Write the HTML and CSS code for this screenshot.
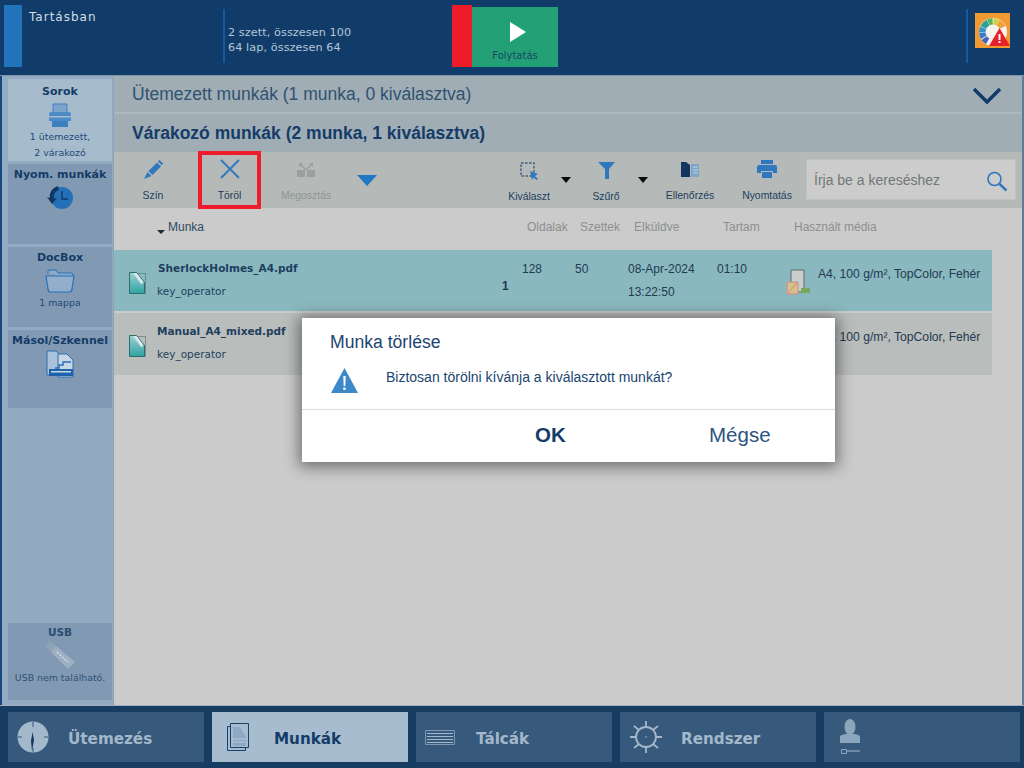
FILE: index.html
```html
<!DOCTYPE html>
<html lang="hu">
<head>
<meta charset="utf-8">
<title>Munkák</title>
<link rel="stylesheet" href="styles.css">
</head>
<body>
<div class="page">
  <header class="topbar">
    <div class="state-block"></div>
    <div class="state-text">Tartásban</div>
    <div class="counts"><div>2 szett, összesen 100</div><div>64 lap, összesen 64</div></div>
    <div class="red-block"></div>
    <div class="resume">
      <svg width="16" height="20" viewBox="0 0 16 20"><path d="M0 0 16 10 0 20Z" fill="#fff"/></svg>
      <span>Folytatás</span>
    </div>
    <div class="top-spacer"></div>
    <div class="top-divider"></div>
    <div class="status-icon">
      <svg width="35" height="35" viewBox="0 0 35 35">
        <rect width="35" height="35" fill="#f29a32"/>
        <circle cx="18" cy="19" r="14" fill="#f6f3ee"/>
        <path d="M18 19 12 6.400A14 14 0 0 1 17.500 5Z" fill="#5cb05e"/>
        <path d="M18 19 18.500 5A14 14 0 0 1 24 6.400Z" fill="#cdd23f"/>
        <path d="M18 19 24.500 6.700A14 14 0 0 1 30.500 13Z" fill="#eda13c"/>
        <path d="M18 19 11.500 6.700A14 14 0 0 0 5.500 13Z" fill="#2f9f96"/>
        <path d="M18 19 5.200 13.500A14 14 0 0 0 4 19.500Z" fill="#3a8fc8"/>
        <path d="M18 19 4 20A14 14 0 0 0 6 26Z" fill="#3d7cc4"/>
        <path d="M18 19 6.500 27A14 14 0 0 0 11 31Z" fill="#4a62b8"/>
        <circle cx="18" cy="19" r="7.500" fill="#f6f3ee"/>
        <path d="M24.500 15 35 33H14Z" fill="#e8212b"/>
        <rect x="23.500" y="21" width="2" height="6" fill="#fff"/>
        <rect x="23.500" y="28" width="2" height="2" fill="#fff"/>
      </svg>
    </div>
  </header>

  <div class="middle">
    <nav class="sidebar">
      <div class="tile tile-active">
        <div class="tile-title">Sorok</div>
        <svg class="tile-icon" width="24" height="25" viewBox="0 0 24 25">
          <path d="M5 1h14v9H5Z" fill="#7da4cb" stroke="#3d80c2"/>
          <path d="M3 9h18a2 2 0 0 1 2 2v7H1v-7a2 2 0 0 1 2-2Z" fill="#4c8bc8"/>
          <rect x="1" y="13" width="22" height="1.500" fill="#a6bccd"/>
          <path d="M4 18h16v6H4Z" fill="#3d80c2"/>
        </svg>
        <div class="tile-sub">1 ütemezett,<br>2 várakozó</div>
      </div>
      <div class="tile tile-jobs">
        <div class="tile-title">Nyom. munkák</div>
        <svg class="tile-icon" width="26" height="24" viewBox="0 0 26 24">
          <circle cx="15" cy="13" r="11" fill="#2470b8"/>
          <path d="M11 1C5 3 2 8 3 13l-3-1 5 7 5-6-3 .5C6 10 8 6 12 5Z" fill="#12365f"/>
          <path d="M15 6v8h6" fill="none" stroke="#12365f" stroke-width="1.300"/>
        </svg>
      </div>
      <div class="tile tile-docbox">
        <div class="tile-title">DocBox</div>
        <svg class="tile-icon" width="30" height="24" viewBox="0 0 30 24">
          <path d="M3 5V2q0-1 1-1h7l2 3h13q2 0 2 2v2" fill="#8ea9c6" stroke="#2672bd"/>
          <path d="M1 7h28l-2 13q0 3-3 3H6q-3 0-3-3Z" fill="#92aecb" stroke="#2672bd" stroke-width="1.200"/>
        </svg>
        <div class="tile-sub">1 mappa</div>
      </div>
      <div class="tile tile-copy">
        <div class="tile-title">Másol/Szkennel</div>
        <svg class="tile-icon" width="28" height="28" viewBox="0 0 28 28">
          <path d="M1 1h9l4 4v20H1Z" fill="#a9c1d9" stroke="#2a70b5"/>
          <path d="M12 4h9l6 6v17H12Z" fill="#c8d7e5" stroke="#2a70b5"/>
          <path d="M9 18h4v-3h4v-3h8" fill="none" stroke="#2a70b5" stroke-width="1.500"/>
          <rect x="3" y="19" width="24" height="7" fill="#1c63ab"/>
          <rect x="5" y="21" width="20" height="1.500" fill="#c8d7e5"/>
        </svg>
      </div>
      <div class="side-spacer"></div>
      <div class="tile tile-usb">
        <div class="tile-title tile-title-small">USB</div>
        <svg class="usb-icon" width="32" height="30" viewBox="0 0 32 30">
          <path d="M1 6 6 1l6 5-5 6Z" fill="#8fa3b6"/>
          <path d="M7 12 12 6 31 22 24 29Z" fill="#9eb0c1"/>
          <path d="M13 12 24 22" stroke="#d3dce3" stroke-width="1.500" stroke-dasharray="2 1.500"/>
        </svg>
        <div class="tile-sub usb-sub">USB nem található.</div>
      </div>
    </nav>

    <main class="content">
      <div class="queue-row queue-sched">
        <span>Ütemezett munkák (1 munka, 0 kiválasztva)</span>
        <svg class="chevron" width="30" height="17" viewBox="0 0 30 17"><path d="M2 2 15 15 28 2" fill="none" stroke="#113c6a" stroke-width="3.500"/></svg>
      </div>
      <div class="queue-row queue-wait">Várakozó munkák (2 munka, 1 kiválasztva)</div>

      <div class="toolbar">
        <div class="tool tool-szin">
          <svg width="20" height="20" viewBox="0 0 20 20"><path d="M5.500 11 14 2.500 18 6.500 9.500 15Z" fill="#2f78bd"/><path d="M15 1.500 16.500 0 20 3.500 18.800 5.200Z" fill="#2f78bd"/><path d="M1 19 4.500 12 8.500 16Z" fill="#2f78bd"/></svg>
          <span>Szín</span>
        </div>
        <div class="tool tool-del">
          <svg width="22" height="22" viewBox="0 0 22 22"><path d="M2 2 20 20M20 2 2 20" stroke="#2f78bd" stroke-width="1.800" fill="none"/></svg>
          <span>Töröl</span>
        </div>
        <div class="tool tool-share">
          <svg width="20" height="15" viewBox="0 0 20 15"><path d="M1 7h8v7H1ZM11 7h8v7h-8Z" fill="#9a9f9f"/><path d="M10 7 5 2M10 7l5-5" stroke="#9a9f9f" stroke-width="1.500" fill="none"/><path d="M3 0h4L3 4ZM17 0h-4l4 4Z" fill="#9a9f9f"/></svg>
          <span>Megosztás</span>
        </div>
        <div class="more-arrow"></div>
        <div class="tool-spacer"></div>
        <div class="tool tool-select">
          <svg width="18" height="18" viewBox="0 0 18 18"><path d="M1 1h13v13H1Z" fill="none" stroke="#3f5f7e" stroke-width="1.400" stroke-dasharray="2.500 1.500"/><path d="M10 9 18 12 15 14 18 17 16.500 18 13.500 15.500 12 18Z" fill="#2f78bd"/></svg>
          <span>Kiválaszt</span>
        </div>
        <div class="drop-arrow drop-a"></div>
        <div class="tool tool-filter">
          <svg width="17" height="17" viewBox="0 0 17 17"><path d="M0 0h17l-6 7v10H7V7Z" fill="#2f78bd"/></svg>
          <span>Szűrő</span>
        </div>
        <div class="drop-arrow drop-b"></div>
        <div class="tool tool-check">
          <svg width="18" height="15" viewBox="0 0 18 15"><path d="M0 0h5l4 3v12H0Z" fill="#12365f"/><path d="M10 2h8v13h-8Z" fill="#7ea6c9"/><path d="M12 5h5M12 8h5M12 11h5" stroke="#bfd2e2"/></svg>
          <span>Ellenőrzés</span>
        </div>
        <div class="tool tool-print">
          <svg width="20" height="18" viewBox="0 0 20 18"><path d="M4 0h12v4H4Z" fill="#2f78bd"/><path d="M2 5h16a2 2 0 0 1 2 2v6h-4v-2H4v2H0V7a2 2 0 0 1 2-2Z" fill="#2f78bd"/><path d="M5 12h10v6H5Z" fill="#2f78bd"/></svg>
          <span>Nyomtatás</span>
        </div>
        <div class="search">
          <span>Írja be a kereséshez</span>
          <svg width="22" height="21" viewBox="0 0 22 21"><circle cx="8.500" cy="8" r="6.500" fill="none" stroke="#2f78bd" stroke-width="1.600"/><path d="M13.500 13 20.500 19.500" stroke="#2f78bd" stroke-width="2.400"/></svg>
        </div>
      </div>

      <div class="table-head">
        <div class="col-job"><span class="sort-arrow"></span>Munka</div>
        <div class="th">Oldalak</div>
        <div class="th">Szettek</div>
        <div class="th">Elküldve</div>
        <div class="th">Tartam</div>
        <div class="th">Használt média</div>
      </div>

      <div class="job job-selected">
        <svg class="doc-icon" width="17" height="22" viewBox="0 0 17 22"><defs><linearGradient id="doc1" x1="0" y1="0" x2="0" y2="1"><stop offset="0" stop-color="#9fd0d2"/><stop offset="1" stop-color="#2fa3a3"/></linearGradient></defs><path d="M1.500 1.500h15v20" fill="none" stroke="#3c5f68" stroke-dasharray="1 1"/><path d="M.5.500h7l8 10v11H.5Z" fill="url(#doc1)" stroke="#2d6e6c"/><path d="M4 1h3.500l7 9-2 2.500Z" fill="#d9e8ea"/></svg>
        <div class="job-name"><b>SherlockHolmes_A4.pdf</b><span>key_operator</span></div>
        <div class="job-one">1</div>
        <div class="cell c-pages">128</div>
        <div class="cell c-sets">50</div>
        <div class="cell c-date">08-Apr-2024<br>13:22:50</div>
        <div class="cell c-time">01:10</div>
        <svg class="media-icon" width="26" height="26" viewBox="0 0 26 26"><path d="M5 1h13v22H5Z" fill="#c9cdcc" stroke="#5c6a6c"/><path d="M1 13h11v12H1Z" fill="#d7c08b" stroke="#c98b88"/><path d="M2 24 11 14" stroke="#c98b88"/><rect x="15" y="19" width="9" height="5" fill="#77a95a"/></svg>
        <div class="cell c-media">A4, 100 g/m², TopColor, Fehér</div>
      </div>
      <div class="job job-normal">
        <svg class="doc-icon" width="17" height="22" viewBox="0 0 17 22"><defs><linearGradient id="doc2" x1="0" y1="0" x2="0" y2="1"><stop offset="0" stop-color="#9fd0d2"/><stop offset="1" stop-color="#2fa3a3"/></linearGradient></defs><path d="M1.500 1.500h15v20" fill="none" stroke="#3c5f68" stroke-dasharray="1 1"/><path d="M.5.500h7l8 10v11H.5Z" fill="url(#doc2)" stroke="#2d6e6c"/><path d="M4 1h3.500l7 9-2 2.500Z" fill="#d9e8ea"/></svg>
        <div class="job-name"><b>Manual_A4_mixed.pdf</b><span>key_operator</span></div>
        <div class="job-one"></div>
        <div class="cell c-pages"></div>
        <div class="cell c-sets"></div>
        <div class="cell c-date"></div>
        <div class="cell c-time"></div>
        <div class="media-gap"></div>
        <div class="cell c-media">A4, 100 g/m², TopColor, Fehér</div>
      </div>
    </main>
  </div>

  <footer class="tabs">
    <div class="tab">
      <svg width="32" height="32" viewBox="0 0 32 32"><circle cx="16" cy="16" r="15.500" fill="#a3b8ca"/><path d="M16 1v5M16 27v4M1 16h4M27 16h4" stroke="#375a7c"/><path d="M15.500 11 17 19 15 30 14 20Z" fill="#12365f"/></svg>
      <span class="tab-label tab-label-1">Ütemezés</span>
    </div>
    <div class="tab tab-active">
      <svg width="22" height="28" viewBox="0 0 22 28"><path d="M.5 3.500h18v24H.5Z" fill="none" stroke="#1a4168"/><path d="M3.500.500h18v24H3.500Z" fill="#a7bccf" stroke="#1a4168"/><path d="M6 4h7l6 10v9H6Z" fill="#8da9c4"/><path d="M6 16h13M6 19h13" stroke="#b8c9d8"/></svg>
      <span class="tab-label tab-label-2">Munkák</span>
    </div>
    <div class="tab">
      <svg width="30" height="15" viewBox="0 0 30 15"><path d="M.5.500h29v14H.5Z" fill="none" stroke="#7f98b0"/><path d="M2 3.500h26M2 6.500h26M2 9.500h26M2 12.500h26" stroke="#a3b8ca"/></svg>
      <span class="tab-label tab-label-3">Tálcák</span>
    </div>
    <div class="tab">
      <svg width="34" height="34" viewBox="0 0 34 34"><circle cx="17" cy="17" r="10" fill="none" stroke="#a3b8ca" stroke-width="1.800"/><path d="M17 1v6M17 27v6M1 17h6M27 17h6M5 6l5 4M29 6l-5 4M5 28l5-4M29 28l-5-4" stroke="#a3b8ca" stroke-width="1.800"/><circle cx="17" cy="17" r=".8" fill="#a3b8ca"/></svg>
      <span class="tab-label tab-label-4">Rendszer</span>
    </div>
    <div class="tab">
      <svg class="user-icon" width="22" height="36" viewBox="0 0 22 36"><ellipse cx="11" cy="8" rx="5.500" ry="8" fill="#8ba5bd"/><path d="M1 17q3-2 6-2h8q3 0 6 2v7H1Z" fill="#8ba5bd"/><path d="M2.500 30.500h5v4h-5Z" fill="none" stroke="#8ba5bd"/><path d="M7 32h14" stroke="#8ba5bd" stroke-width="1.300"/></svg>
    </div>
  </footer>

  <div class="modal">
    <div class="modal-body">
      <div class="modal-title">Munka törlése</div>
      <div class="modal-msg">
        <svg width="27" height="25" viewBox="0 0 27 25"><path d="M13.500 0 27 25H0Z" fill="#3d88c9"/><path d="M12.300 8h2.400l-.4 10h-1.600Z" fill="#fff"/><rect x="12.300" y="19.500" width="2.400" height="2.400" fill="#fff"/></svg>
        <span>Biztosan törölni kívánja a kiválasztott munkát?</span>
      </div>
    </div>
    <div class="modal-actions">
      <span class="btn-ok">OK</span>
      <span class="btn-cancel">Mégse</span>
    </div>
  </div>
</div>
</body>
</html>
```
FILE: styles.css
```css
* { box-sizing: border-box; }
html, body { margin: 0; padding: 0; }
body { font-family: "Liberation Sans", Arial, sans-serif; background: #113c6a; }
svg { display: block; flex: none; }
.page { position: relative; width: 1024px; height: 768px; overflow: hidden; display: flex; flex-direction: column; background: #113c6a; }

.topbar { height: 76px; flex: none; display: flex; align-items: flex-start; color: #c4d2df; font-family: "DejaVu Sans", sans-serif; border-bottom: 1px solid #7c93a8; }
.state-block { width: 18px; height: 62px; margin: 5px 0 0 4px; background: #2272bc; flex: none; }
.state-text { width: 194px; margin: 10px 0 0 7px; font-size: 12px; line-height: 14px; letter-spacing: 1px; color: #d3dde6; flex: none; }
.counts { width: 229px; height: 54px; margin-top: 9px; padding: 16px 0 0 3px; border-left: 2px solid #16599c; font-size: 11.200px; line-height: 15px; color: #b6c6d6; flex: none; white-space: nowrap; letter-spacing: .1px; }
.red-block { width: 20px; height: 62px; margin-top: 5px; background: #ed1c28; flex: none; }
.resume { width: 86px; height: 60px; margin-top: 7px; background: #24a077; display: flex; flex-direction: column; align-items: center; padding-top: 15px; flex: none; }
.resume svg { margin-left: 6px; }
.resume span { margin-top: 7px; font-size: 10px; line-height: 13px; color: #154a5f; }
.top-spacer { flex: 1; }
.top-divider { width: 2px; height: 54px; margin-top: 9px; background: #16599c; flex: none; }
.status-icon { margin: 13px 14px 0 7px; flex: none; }

.middle { flex: 1; min-height: 0; display: flex; background: #cbcbcb; border-left: 2px solid #17497c; border-right: 2px solid #5d7c99; }
.sidebar { width: 112px; flex: none; background: #92aac2; padding: 3px 1px 5px 6px; display: flex; flex-direction: column; gap: 3px; border-right: 1px solid #8ca1b4; }
.tile { background: #8199b2; display: flex; flex-direction: column; align-items: center; color: #153c68; flex: none; }
.tile-active { height: 82px; background: #a6bccd; }
.tile-jobs { height: 80px; }
.tile-docbox { height: 80px; }
.tile-copy { height: 78px; }
.tile-usb { height: 77px; }
.side-spacer { flex: 1; }
.tile-title { font-family: "DejaVu Sans", sans-serif; font-weight: 700; font-size: 11px; line-height: 14px; margin-top: 4px; white-space: nowrap; }
.tile-active .tile-title { margin-top: 6px; }
.tile-usb .tile-title { margin-top: 2px; }
.tile-title-small { font-size: 10.500px; color: #284d72; }
.tile-icon { margin-top: 4px; }
.tile-jobs .tile-icon { margin-top: 3px; }
.tile-copy .tile-icon { margin-top: 2px; }
.tile-sub { font-family: "DejaVu Sans", sans-serif; font-size: 9.400px; line-height: 16px; text-align: center; margin-top: 2px; color: #1d4a78; white-space: nowrap; }
.tile-active .tile-sub { margin-top: 1px; }
.usb-icon { margin-top: 1px; }
.usb-sub { margin-top: 0; color: #2f5274; }

.content { flex: 1; min-width: 0; display: flex; flex-direction: column; }
.queue-row { flex: none; display: flex; align-items: center; justify-content: space-between; background: #a0adb4; padding-left: 18px; font-size: 17.500px; white-space: nowrap; }
.queue-sched { height: 38px; border-bottom: 2px solid #adb8be; padding-right: 20px; color: #2f5272; }
.chevron { margin-top: 2px; }
.queue-wait { height: 38px; font-weight: 700; color: #153c68; }

.toolbar { height: 56px; flex: none; display: flex; background: #b5b9b8; position: relative; }
.tool { flex: none; display: flex; flex-direction: column; align-items: center; font-size: 10.400px; line-height: 13px; color: #1c3f60; padding-top: 6px; position: relative; height: 100%; white-space: nowrap; }
.tool span { position: absolute; top: 37px; left: 50%; transform: translateX(-50%); }
.tool-szin { width: 78px; padding-top: 8px; }
.tool-del { width: 63px; height: 58px; margin-top: -1px; border: 4px solid #ed1c28; padding-top: 3px; margin-left: 6px; }
.tool-del span { top: 34px; color: #1a3b59; }
.tool-share { width: 90px; color: #8e9596; padding-top: 11px; }
.more-arrow { width: 0; height: 0; margin: 23px 0 0 6px; border-left: 10px solid transparent; border-right: 10px solid transparent; border-top: 11px solid #2077c4; flex: none; }
.tool-spacer { flex: 1; }
.tool-select { width: 46px; padding-top: 10px; }
.tool-select span { top: 38px; }
.drop-arrow { width: 0; height: 0; margin-top: 25px; border-left: 5px solid transparent; border-right: 5px solid transparent; border-top: 6px solid #0b0b0b; flex: none; }
.drop-a { margin-left: 9px; margin-right: 14px; }
.drop-b { margin-left: 11px; margin-right: 9px; }
.tool-filter { width: 42px; padding-top: 10px; }
.tool-filter span { top: 38px; }
.tool-check { width: 66px; margin-right: 5px; padding-top: 10px; }
.tool-print { width: 78px; padding-top: 8px; }
.search { width: 210px; height: 41px; margin: 7px 6px 0 0; background: #cbcccb; border: 1px solid #bec2c1; display: flex; justify-content: space-between; align-items: center; padding: 0 7px 0 7px; font-size: 14px; color: #737779; flex: none; }
.search svg { margin-top: 3px; }

.table-head { height: 42px; flex: none; display: flex; align-items: flex-start; padding-top: 12px; font-size: 12px; line-height: 14px; color: #8b8f90; white-space: nowrap; }
.col-job { width: 413px; padding-left: 43px; color: #2f4a63; }
.sort-arrow { display: inline-block; width: 0; height: 0; margin-right: 3px; vertical-align: -3px; border-left: 4px solid transparent; border-right: 4px solid transparent; border-top: 4px solid #1a2a38; }
.th:nth-child(2) { width: 53px; }
.th:nth-child(3) { width: 54px; }
.th:nth-child(4) { width: 89px; }
.th:nth-child(5) { width: 71px; }

.job { width: 878px; height: 61px; flex: none; display: flex; align-items: flex-start; font-size: 12px; color: #1f3a52; white-space: nowrap; position: relative; margin-bottom: 2px; }
.job-selected { background: #8ab8bf; }
.job-normal { background: #b9bdbb; height: 62px; }
.doc-icon { margin: 22px 0 0 15px; }
.job-name { width: 345px; margin-left: 11px; display: flex; flex-direction: column; font-family: "DejaVu Sans", sans-serif; font-size: 10.500px; color: #1d3f60; flex: none; }
.job-name b { margin-top: 11px; font-size: 10.500px; line-height: 14px; }
.job-selected b { margin-left: 1px; }
.job-name span { margin-top: 9px; line-height: 14px; }
.job-one { width: 20px; padding-top: 29px; font-weight: 700; line-height: 14px; flex: none; }
.cell { line-height: 23px; flex: none; padding-top: 8px; }
.c-pages { width: 53px; }
.c-sets { width: 53px; }
.c-date { width: 89px; }
.c-time { width: 69px; }
.media-icon { margin: 19px 6px 0 0; flex: none; }
.media-gap { width: 32px; flex: none; }
.c-media { padding-top: 13px; font-size: 12.150px; }

.tabs { height: 63px; flex: none; display: grid; grid-template-columns: repeat(5, 196px); gap: 8px; padding: 6px 4px 6px 8px; background: #173d63; border-top: 1px solid #a0b0bf; }
.tab { background: #375a7c; display: flex; align-items: center; padding-left: 9px; font-family: "DejaVu Sans", sans-serif; font-weight: 700; font-size: 15.200px; color: #a3b8ca; }
.tab-active { background: #a7bccf; color: #153c68; padding-left: 15px; }
.tab-label { white-space: nowrap; padding-top: 3px; }
.tab-label-1 { margin-left: 19px; }
.tab-label-2 { margin-left: 25px; }
.tab-label-3 { margin-left: 21px; }
.tab-label-4 { margin-left: 18px; }
.user-icon { margin-left: 6px; margin-top: 0; }

.modal { position: absolute; left: 302px; top: 318px; width: 533px; height: 144px; background: #fff; box-shadow: 0 2px 14px 3px rgba(0,0,0,.45); display: flex; flex-direction: column; color: #1a4570; }
.modal-body { height: 92px; flex: none; border-bottom: 1px solid #dcdcdc; padding: 14px 0 0 28px; }
.modal-title { font-size: 17.600px; line-height: 20px; }
.modal-msg { display: flex; align-items: flex-start; margin-top: 16px; margin-left: 1px; font-size: 14px; line-height: 18px; }
.modal-msg span { margin-left: 28px; }
.modal-actions { flex: 1; display: flex; align-items: center; font-size: 20.500px; padding-left: 233px; padding-bottom: 2px; }
.btn-ok { font-weight: 700; color: #153c68; width: 174px; }
.btn-cancel { color: #2a5580; }
```
